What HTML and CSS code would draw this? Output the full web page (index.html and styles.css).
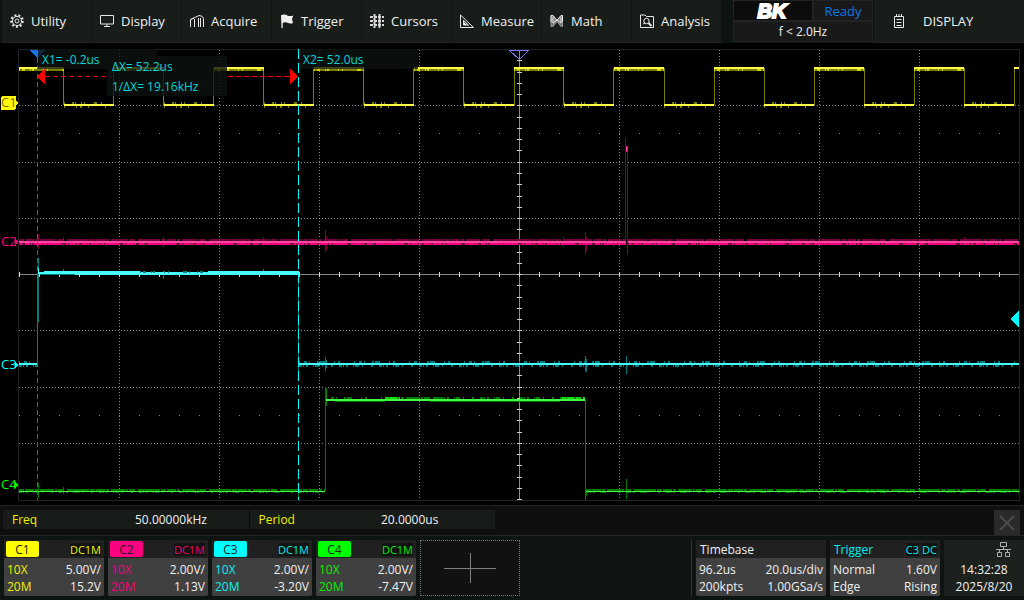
FILE: index.html
```html
<!DOCTYPE html>
<html lang="en">
<head>
<meta charset="utf-8">
<title>Oscilloscope</title>
<link rel="stylesheet" href="styles.css">
</head>
<body>
<header class="topbar">
  <nav class="menu">
    <button class="menu-item">
      <svg class="icon" viewBox="0 0 14 14"><circle cx="7" cy="7" r="5.8" class="gear-teeth"/><circle cx="7" cy="7" r="4.600" class="ln"/><circle cx="7" cy="7" r="2" class="ln"/></svg>
      Utility
    </button>
    <button class="menu-item">
      <svg class="icon" viewBox="0 0 14 14"><path class="ln" d="M.5 1.500h13v8.500H.5zM7 10v2.500M4 12.500h6"/></svg>
      Display
    </button>
    <button class="menu-item">
      <svg class="icon" viewBox="0 0 14 14"><path class="ln" d="M.5 13V5.500L9 1.500q4 0 4.500 3V13M4.500 13V5M8.500 13V4M10.500 13V4M1 5.500l3-1.500"/></svg>
      Acquire
    </button>
    <button class="menu-item">
      <svg class="icon" viewBox="0 0 14 14"><path class="fl" d="M1 1h1.300c2-.8 3.500-.5 5 .4s3.500.8 6 0L12 5l1 4c-2 .8-4 .6-5.500-.3S4 8 2.700 9v5H1.500z"/></svg>
      Trigger
    </button>
    <button class="menu-item">
      <svg class="icon" viewBox="0 0 14 14"><path class="grid" d="M4.500 0v14M9.500 0v14M0 3h14M0 7h14M0 11h14"/></svg>
      Cursors
    </button>
    <button class="menu-item">
      <svg class="icon" viewBox="0 0 14 14"><path class="ln" d="M.500 1v12.500H13.500zM3.500 6.500v4.500h5z"/><path class="fl" d="M4 8l3 3H4z"/></svg>
      Measure
    </button>
    <button class="menu-item">
      <svg class="icon" viewBox="0 0 14 14"><path class="dim" d="M1 12.500V1.500h2l4 5 4-5h1.500v11h-1.500L7 7.500l-4 5z"/><path class="ln" d="M1 8V1.500h2l4 5 4-5h1.500V8M3 3v6l4-3 4 3V3"/></svg>
      Math
    </button>
    <button class="menu-item">
      <svg class="icon" viewBox="0 0 14 14"><path class="ln" d="M.500 13.500V1h4.500l1.500 1.500h7v11z"/><circle class="ln" cx="6.500" cy="7" r="2.700"/><path class="ln2" d="M8.500 9l3 3"/><path class="ln" d="M3 10l2-1"/></svg>
      Analysis
    </button>
  </nav>
  <div class="status">
    <div class="brand">BK</div>
    <div class="state">Ready</div>
    <div class="counter">f &lt; 2.0Hz</div>
  </div>
  <button class="panel-title">
    <svg class="icon-list" viewBox="0 0 11 15"><path class="ln" d="M.5 2.500h9v11H.5zM2.500 5.500h5M2.500 8.500h5M2.500 11.500h5M2.500 0v3M5 0v3M7.500 0v3"/></svg>
    DISPLAY
  </button>
</header>

<main>
<svg class="scope" viewBox="0 44 1024 460">
  <!-- graticule -->
  <path class="frame" d="M18.500 500.500V49.500H1019.500V500.500z"/>
  <path class="dots" d="M19 105.500H1019M19 162.500H1019M19 218.500H1019M19 330.500H1019M19 387.500H1019M19 443.500H1019"/>
  <path class="dots" d="M119.500 50V500M219.500 50V500M319.500 50V500M419.500 50V500M619.500 50V500M719.500 50V500M819.500 50V500M919.500 50V500"/>
  <path class="sparse" d="M19 133.500H1019M19 415.500H1019"/>
  <path class="axis" d="M19 274.500H1019M519.500 50V500"/>
  <path class="xticks" d="M19 274.500H1019"/>
  <path class="yticks" d="M517 60.500h5m-5 12h5m-5 11h5m-5 11h5m-5 11h5m-5 12h5m-5 11h5m-5 11h5m-5 11h5m-5 12h5m-5 11h5m-5 11h5m-5 12h5m-5 11h5m-5 11h5m-5 11h5m-5 12h5m-5 11h5m-5 11h5m-5 11h5m-5 11h5m-5 12h5m-5 11h5m-5 11h5m-5 11h5m-5 12h5m-5 11h5m-5 11h5m-5 11h5m-5 12h5m-5 11h5m-5 11h5m-5 11h5m-5 12h5m-5 11h5m-5 11h5m-5 11h5m-5 12h5m-5 11h5m-5 11h5"/>

  <!-- C1 -->
  <g class="ch1">
    <path class="edge" d="M63.500 68V105M113.500 68V105M163.500 68V105M213.500 68V105M263.500 68V105M313.500 68V105M363.500 68V105M413.500 68V105M463.500 68V105M514.500 68V105M563.500 68V105M613.500 68V105M664.500 68V105M714.500 68V105M764.500 68V105M814.500 68V105M864.500 68V105M914.500 68V105M964.500 68V105M1014.500 67V105"/>
    <path class="noise low-noise" d="M64 103h50M164 103h50M264 103h50M364 103h50M464 103h50M564 103h50M664 103h50M764 103h50M864 103h50M964 103h50"/>
    <path class="noise low-noise2" d="M64 107h50M164 107h50M264 107h50M364 107h50M464 107h50M564 107h50M664 107h50M764 107h50M864 107h50M964 107h50"/>
    <path class="noise" d="M19 70h45M114 70h50M214 70h50M314 70h50M414 70h50M514 70h50M614 70h50M714 70h50M814 70h50M914 70h50"/>
    <path class="noise speck bright" d="M19 70h45M114 70h50M214 70h50M314 70h50M414 70h50M514 70h50M614 70h50M714 70h50M814 70h50M914 70h50"/>
    <path class="main" d="M19 68h45M114 68h50M214 68h50M314 68h50M414 68h50M514 68h50M614 68h50M714 68h50M814 68h50M914 68h50M1014 68h5"/>
    <path class="main" d="M64 105h50M164 105h50M264 105h50M364 105h50M464 105h50M564 105h50M664 105h50M764 105h50M864 105h50M964 105h50"/>
  </g>

  <!-- C2 -->
  <g class="ch2">
    <path class="edge" d="M625.500 138V241M627.500 149V255M325.500 230V252M326.500 236V250M585.500 232V254M586.500 237V251M38.500 234V249M63.500 237V246M163.500 237V247M263.500 237V246M563.500 237V247M613.500 240V247M964.500 237V243"/>
    <path class="noise busy" d="M19 240H625M628 240H1019"/>
    <path class="under" d="M19 244H626M628 244H1019"/>
    <path class="noise speck" d="M19 244H626M628 244H1019"/>
    <path class="main" d="M19 242H626M628 242H1019"/>
    <path class="under" d="M626.500 146V152"/>
    <path class="main thin" d="M626.500 147V151"/>
  </g>

  <!-- C3 -->
  <g class="ch3">
    <path class="edge" d="M37.500 364V273M38.500 258V322M298.500 273V371M325.500 357V371M326.500 360V368M585.500 356V371M586.500 359V372M626.500 356V374M63.500 269V273M163.500 271V279M263.500 269V274"/>
    <path class="noise sparse-noise" d="M19 362H37M299 362H1019"/>
    <path class="noise sparse-noise2" d="M19 366H37M299 366H1019"/>
    <path class="noise" d="M40 274H298"/>
    <path class="main" d="M19 364H37M299 364H1019M39 273H299"/>
    <path class="main" d="M44 272H140M208 272H299"/>
    <path class="main" d="M75 274H299"/>
    <path class="noise speck" d="M140 272H208"/>
    <path class="main thin" d="M38.500 268V274"/>
  </g>

  <!-- C4 -->
  <g class="ch4">
    <path class="edge" d="M325.500 387V491M326.500 388V406M585.500 400V500M38.500 483V498M63.500 487V494M298.500 487V497M586.500 490V496M626.500 479V499"/>
    <path class="noise busy" d="M19 490H325M586 490H1019"/>
    <path class="noise sparse-noise2" d="M19 492H325M586 492H1019"/>
    <path class="noise sparse-noise" d="M326 398H385"/>
    <path class="noise busy" d="M385 398H440M562 398H585"/>
    <path class="noise sparse-noise2" d="M440 398H562"/>
    <path class="mid" d="M385 398H400M562 398H585"/>
    <path class="noise thin" d="M335 401.500H385M430 401.500H560"/>
    <path class="main thin" d="M19 491.500H325M586 491.500H1019"/>
    <path class="main" d="M326 400H585"/>
  </g>

  <!-- cursors -->
  <path class="cursor1" d="M37.500 50V500"/>
  <path class="cursor2" d="M298.500 49V500"/>
  <path class="trig-pos" d="M29 50H46L37.500 58z"/>
  <path class="delta" d="M45 76.500H107M228 76.500H290"/>
  <path class="arrow" d="M37 76.500L45 69V84zM298 76.500L290 69V84z"/>
  <path class="readout-bg" d="M38 49h119v20H38zM107 56h120v40H107zM299 49h119v20H299z"/>
  <g class="readout">
    <text x="42" y="64">X1= -0.2us</text>
    <text x="112" y="71">ΔX= 52.2us</text>
    <text x="112" y="91">1/ΔX= 19.16kHz</text>
    <text x="303" y="64">X2= 52.0us</text>
  </g>
  <path class="trig-center" d="M509.500 50.500H528.500L519.500 59.500z"/>
  <path class="trig-level" d="M1010 319L1019 311V328z"/>

  <!-- channel zero markers -->
  <rect class="mark1" x="1" y="96" width="15" height="14" rx="2"/>
  <path class="mark1" d="M15 100L19 103L15 106z"/>
  <path class="mark2" d="M15 239L19 242L15 245z"/>
  <path class="mark3" d="M15 362L19 365L15 368z"/>
  <path class="mark4" d="M15 482L19 485L15 488z"/>
  <g class="marks">
    <text class="on-yellow" x="1" y="107">C1</text>
    <text class="mark2" x="1" y="246">C2</text>
    <text class="mark3" x="1" y="369">C3</text>
    <text class="mark4" x="1" y="489">C4</text>
  </g>
</svg>

<section class="measure">
  <table class="measure-table">
    <tr><th scope="row">Freq</th><td>50.00000kHz</td><th scope="row">Period</th><td>20.0000us</td></tr>
  </table>
  <button class="close" aria-label="Close">
    <svg viewBox="0 0 16 16"><path d="M1 1L15 15M15 1L1 15"/></svg>
  </button>
</section>
</main>

<footer class="bottom">
  <button class="card c1">
    <span class="head"><span class="chip">C1</span><span class="tag">DC1M</span></span>
    <span class="row"><span class="tint">10X</span><span>5.00V/</span></span>
    <span class="row"><span class="tint">20M</span><span>15.2V</span></span>
  </button>
  <button class="card c2">
    <span class="head"><span class="chip">C2</span><span class="tag">DC1M</span></span>
    <span class="row"><span class="tint">10X</span><span>2.00V/</span></span>
    <span class="row"><span class="tint">20M</span><span>1.13V</span></span>
  </button>
  <button class="card c3">
    <span class="head"><span class="chip">C3</span><span class="tag">DC1M</span></span>
    <span class="row"><span class="tint">10X</span><span>2.00V/</span></span>
    <span class="row"><span class="tint">20M</span><span>-3.20V</span></span>
  </button>
  <button class="card c4">
    <span class="head"><span class="chip">C4</span><span class="tag">DC1M</span></span>
    <span class="row"><span class="tint">10X</span><span>2.00V/</span></span>
    <span class="row"><span class="tint">20M</span><span>-7.47V</span></span>
  </button>
  <button class="add" aria-label="Add">
    <svg viewBox="0 0 52 30"><path d="M0 15.500H52M26.500 0V30"/></svg>
  </button>
  <div class="right">
    <button class="card timebase">
      <span class="head">Timebase</span>
      <span class="row"><span>96.2us</span><span>20.0us/div</span></span>
      <span class="row"><span>200kpts</span><span>1.00GSa/s</span></span>
    </button>
    <button class="card trigger">
      <span class="head"><span class="tint">Trigger</span><span class="tags"><span class="tag">C3</span><span class="tag">DC</span></span></span>
      <span class="row"><span>Normal</span><span>1.60V</span></span>
      <span class="row"><span>Edge</span><span>Rising</span></span>
    </button>
    <div class="clock">
      <svg class="lan" viewBox="0 0 15 15"><path d="M4.500.500h6v4h-6zM1.500 10.500h4v4h-4zM9.500 10.500h4v4h-4zM7.500 5v2M0 7.500h15M3.500 8v2M11.500 8v2"/></svg>
      <time>14:32:28</time>
      <time>2025/8/20</time>
    </div>
  </div>
</footer>
</body>
</html>
```
FILE: styles.css
```css
* {
	box-sizing: border-box;
}
body {
	margin: 0;
	background: #000;
	color: #f0f0f0;
	font-family: "Open Sans", "Noto Sans", sans-serif;
	font-size: 12px;
	line-height: 17px;
}
button {
	margin: 0;
	padding: 0;
	border: 0;
	color: inherit;
	font: inherit;
	text-align: left;
	cursor: pointer;
}
main {
	display: block;
}

/* top bar */
.topbar {
	display: flex;
	height: 44px;
	padding-left: 2px;
	background: #0e1411;
	border-bottom: 1px solid #000;
	font-size: 13px;
}
.menu {
	display: flex;
}
.menu-item {
	display: flex;
	align-items: center;
	gap: 7px;
	width: 90px;
	padding-left: 8px;
	background: #181d1a;
	border-right: 1px solid #101512;
	border-bottom: 1px solid #1f2421;
}
.icon {
	width: 14px;
	height: 14px;
	flex: none;
}
.ln, .ln2, .gear-teeth, .grid {
	fill: none;
	stroke: #e8e8e8;
	stroke-width: 1;
}
.ln2, .grid {
	stroke-width: 2;
}
.grid {
	stroke: #d8d8d8;
	stroke-dasharray: 3 1;
}
.gear-teeth {
	stroke-width: 2;
	stroke-dasharray: 2 2;
}
.fl {
	fill: #f0f0f0;
}
.dim {
	fill: #777;
	stroke: #999;
}
.status {
	display: grid;
	grid-template-columns: 80px 60px;
	grid-template-rows: 21px 21px;
	width: 140px;
	margin-left: 11px;
	text-align: center;
}
.status > div {
	background: #191919;
	border: 1px solid #202422;
}
.status .brand {
	padding-right: 2px;
	background: #0b0c0b;
	color: #fff;
	font: italic bold 20px/20px "Liberation Sans", sans-serif;
	-webkit-text-stroke: 2px #fff;
}
.state {
	color: #0a78e8;
	line-height: 20px;
}
.counter {
	grid-column: 1 / 3;
	font-size: 12px;
	line-height: 19px;
}
.panel-title {
	display: flex;
	flex: 1;
	align-items: center;
	gap: 18px;
	margin-left: 1px;
	padding-left: 20px;
	background: #181d1a;
	border-bottom: 1px solid #1f2421;
}
.icon-list {
	width: 11px;
	height: 15px;
}

/* waveform area */
.scope {
	display: block;
	width: 100%;
	shape-rendering: crispEdges;
}
.scope path {
	fill: none;
}
.scope .frame {
	stroke: #222;
}
.scope .dots {
	stroke: #888;
	stroke-dasharray: 1 2;
}
.scope .sparse {
	stroke: #888;
	stroke-dasharray: 1 19;
}
.scope .axis {
	stroke: #888;
}
.scope .xticks {
	stroke: #d8d8d8;
	stroke-width: 5;
	stroke-dasharray: 1 19;
}
.scope .yticks {
	stroke: #d0d0d0;
}
.main, .noise, .under, .mid {
	stroke-width: 2;
}
.scope .thin {
	stroke-width: 1;
}
.mid {
	stroke-dasharray: 4 1 7 2 3 1 1 2;
}
.busy {
	stroke-dasharray: 5 1 9 1 3 2 14 1 2 1 6 3 22 1;
}
.speck {
	stroke-dasharray: 1 2 3 5 1 1 2 9 1 3 1 14 4 2 1 7;
}
.low-noise {
	stroke-dasharray: 1 7 2 1 1 5 1 2 1 9 3 4 1 12;
}
.low-noise2 {
	stroke-dasharray: 1 11 1 3 2 6 1 16;
}
.sparse-noise {
	stroke-dasharray: 1 4 3 2 1 7 2 1 5 9 1 3 2 14;
}
.sparse-noise2 {
	stroke-dasharray: 3 1 1 2 2 5 1 1 4 3 1 8 2 6;
}
.ch1 .main { stroke: #ffff45; }
.ch1 .edge, .ch1 .noise { stroke: #7c7c00; }
.ch1 .bright { stroke: #d4d400; }
.ch2 .main { stroke: #ff48a4; }
.ch2 .under { stroke: #ff0080; }
.ch2 .edge, .ch2 .noise { stroke: #7c0040; }
.ch3 .main { stroke: #45ffff; }
.ch3 .edge, .ch3 .noise { stroke: #007c7c; }
.ch4 .main { stroke: #45ff45; }
.ch4 .mid { stroke: #00e400; }
.ch4 .edge, .ch4 .noise { stroke: #007c00; }
.cursor1 {
	stroke: #008a8a;
	stroke-dasharray: 5 3;
}
.cursor2 {
	stroke: #00ffff;
	stroke-dasharray: 10 4;
}
.delta {
	stroke: #f00;
	stroke-dasharray: 5 3;
}
.scope .arrow {
	fill: #f00;
}
.scope .trig-pos {
	fill: #1474e8;
}
.scope .readout-bg {
	fill: #0d120f;
	fill-opacity: .8;
}
.readout {
	fill: #00d8d8;
	font-size: 12px;
}
.trig-center {
	stroke: #7878f0;
}
.scope .trig-level {
	fill: #00ffff;
}
.marks {
	font-size: 13px;
}
.on-yellow { fill: #8a6a00; }
.scope .mark1 { fill: #ffff00; }
.scope .mark2 { fill: #ff0080; }
.scope .mark3 { fill: #00ffff; }
.scope .mark4 { fill: #00ff00; }

/* measurements */
.measure {
	display: flex;
	justify-content: space-between;
	height: 31px;
	margin-top: 1px;
	padding: 4px 4px 0 3px;
	background: #0f0f0f;
	border-top: 1px solid #242424;
	border-bottom: 1px solid #242424;
}
.measure-table {
	width: 492px;
	height: 19px;
	table-layout: fixed;
	border-collapse: collapse;
	background: #171c19;
}
.measure-table th, .measure-table td {
	padding: 0 0 0 9px;
	font-weight: normal;
	text-align: left;
}
.measure-table th {
	color: #f0f000;
}
.measure-table th + td + th {
	border-left: 1px solid #0a0c0b;
}
.close {
	width: 26px;
	height: 25px;
	padding: 5px;
	background: #2a2a2a;
}
.close svg {
	display: block;
	width: 16px;
	height: 16px;
	stroke: #4c4c4c;
	stroke-width: 2;
}

/* bottom bar */
.bottom {
	display: flex;
	gap: 4px;
	height: 64px;
	padding: 4px 0 4px 4px;
	background: #0e1411;
}
.card {
	display: flex;
	flex-direction: column;
	width: 100px;
	height: 56px;
	background: #404040;
	border-radius: 2px;
	overflow: hidden;
}
.head {
	display: flex;
	justify-content: space-between;
	align-items: center;
	height: 18px;
	margin-bottom: 3px;
	padding: 0 3px 0 2px;
	background: #202020;
}
.chip {
	width: 33px;
	height: 16px;
	border-radius: 2px;
	color: #222;
	line-height: 17px;
	text-align: center;
}
.tag {
	background: #111412;
	font-size: 11px;
	line-height: 13px;
}
.row {
	display: flex;
	justify-content: space-between;
	padding: 0 3px;
}
.c1 .chip { background: #ffff00; }
.c2 .chip { background: #ff0080; }
.c3 .chip { background: #00ffff; }
.c4 .chip { background: #00ff00; }
.c1 .tint, .c1 .tag { color: #f0f000; }
.c2 .tint, .c2 .tag { color: #f00078; }
.c3 .tint, .c3 .tag, .trigger .tint, .trigger .tag { color: #00f0f0; }
.c4 .tint, .c4 .tag { color: #00f000; }
.add {
	display: flex;
	align-items: center;
	justify-content: center;
	width: 100px;
	background: #111;
	border: 1px dotted #777;
}
.add svg {
	width: 52px;
	height: 30px;
	stroke: #808080;
	fill: none;
}
.right {
	display: flex;
	gap: 4px;
	margin-left: auto;
	padding-left: 4px;
	border-left: 1px solid #303532;
}
.timebase {
	width: 130px;
}
.trigger {
	width: 110px;
}
.timebase .head, .trigger .head {
	padding-left: 4px;
}
.tags {
	display: flex;
	gap: 3px;
}
.clock {
	display: flex;
	flex-direction: column;
	align-items: center;
	width: 80px;
	background: #1c211e;
}
.lan {
	width: 15px;
	height: 15px;
	margin: 2px 13px 4px auto;
	stroke: #b0b0b0;
	fill: none;
}
```
